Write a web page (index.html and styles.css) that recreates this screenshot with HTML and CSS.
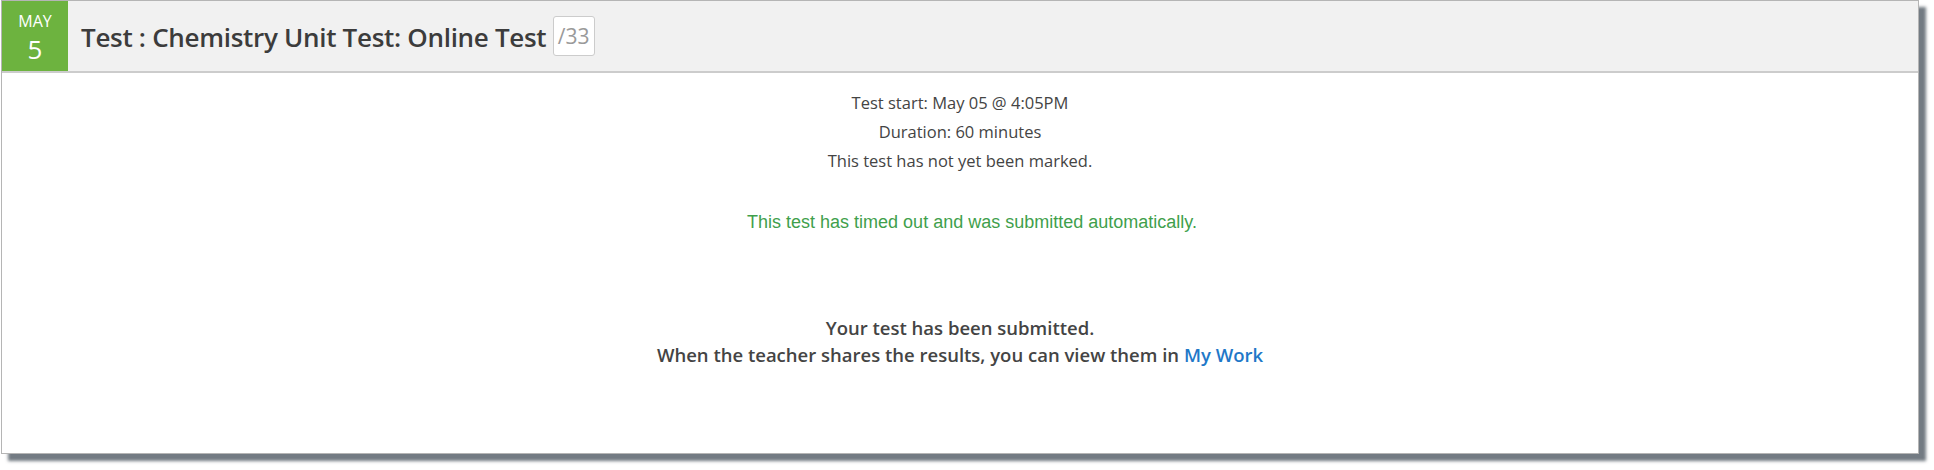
FILE: index.html
```html
<!DOCTYPE html>
<html>
<head>
<meta charset="utf-8">
<link rel="stylesheet" href="styles.css">
</head>
<body>
<div class="panel">
  <div class="panel-header">
    <div class="date-badge">
      <div class="date-month">MAY</div>
      <div class="date-day">5</div>
    </div>
    <div class="title">Test : Chemistry Unit Test: Online Test <span class="score">/33</span></div>
  </div>
  <div class="panel-body">
    <div class="info">
      <div class="info-line">Test start: May 05 @ 4:05PM</div>
      <div class="info-line">Duration: 60 minutes</div>
      <div class="info-line">This test has not yet been marked.</div>
    </div>
    <div class="timeout">This test has timed out and was submitted automatically.</div>
    <div class="submitted">
      <div class="submitted-line">Your test has been submitted.</div>
      <div class="submitted-line">When the teacher shares the results, you can view them in <a class="link" href="#">My Work</a></div>
    </div>
  </div>
</div>
</body>
</html>
```

FILE: styles.css
```css
html, body {
  margin: 0;
  padding: 0;
  background: #ffffff;
}

body {
  font-family: "Open Sans", "Noto Sans", sans-serif;
  color: #444444;
  min-height: 470px;
}

.panel {
  box-sizing: border-box;
  width: 1918px;
  height: 454px;
  margin-left: 1px;
  border: 1px solid #b5b5b5;
  background: #ffffff;
  box-shadow: 7px 7px 3px rgba(80, 90, 100, 0.8);
  display: flex;
  flex-direction: column;
}

.panel-header {
  display: flex;
  align-items: stretch;
  height: 72px;
  box-sizing: border-box;
  background: #f1f1f1;
  border-bottom: 2px solid #cccccc;
}

.date-badge {
  width: 66px;
  background: #6db33f;
  color: #ffffff;
  display: flex;
  flex-direction: column;
  align-items: center;
  padding-top: 10px;
  box-sizing: border-box;
}

.date-month {
  font-size: 16px;
  line-height: 20px;
}

.date-day {
  font-size: 26px;
  line-height: 30px;
  margin-top: 3px;
}

.title {
  display: flex;
  align-items: center;
  margin-left: 13px;
  padding-top: 2px;
  font-size: 26px;
  font-weight: 600;
  letter-spacing: -0.3px;
  color: #3c3c3c;
  white-space: pre;
}

.score {
  display: inline-block;
  box-sizing: border-box;
  height: 40px;
  line-height: 38px;
  padding: 0 4px;
  margin-top: -2px;
  border: 1px solid #cccccc;
  border-radius: 3px;
  background: #ffffff;
  color: #9a9a9a;
  font-size: 21px;
  font-weight: 400;
  letter-spacing: 0;
}

.panel-body {
  display: flex;
  flex-direction: column;
  align-items: center;
  padding-top: 15px;
}

.info-line {
  font-size: 16.5px;
  line-height: 29px;
  text-align: center;
  color: #444444;
}

.timeout {
  margin-top: 35px;
  padding-left: 24px;
  font-family: "Liberation Sans", Arial, sans-serif;
  font-size: 18px;
  line-height: 24px;
  color: #3f9f4c;
}

.submitted {
  margin-top: 80px;
  text-align: center;
}

.submitted-line {
  font-size: 18.5px;
  line-height: 27px;
  font-weight: 600;
  color: #444444;
}

.link {
  color: #1f78c8;
  text-decoration: none;
}
```
